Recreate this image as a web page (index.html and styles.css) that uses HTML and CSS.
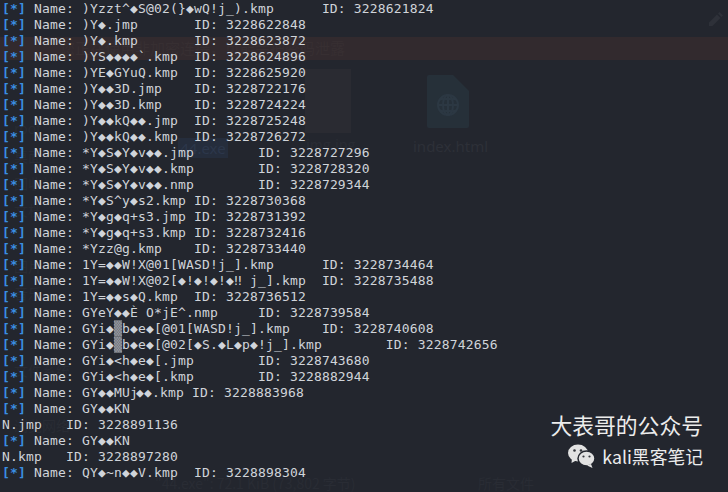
FILE: index.html
```html
<!DOCTYPE html>
<html lang="zh">
<head>
<meta charset="utf-8">
<title>Terminal</title>
<link rel="stylesheet" href="styles.css">
</head>
<body>
<div class="ghosts" aria-hidden="true">
  <div class="band"></div>
  <span class="gt g-warn">您正在使用非加密连接，可能会把密码泄露</span>
  <span class="gt g-root">root</span>
  <span class="gt g-a">桌面</span>
  <span class="gt g-b">回收站</span>
  <span class="gt g-c">文档</span>
  <span class="gt g-e">图片</span>
  <span class="gt g-f">音乐</span>
  <span class="gt g-h">文件系统</span>
  <span class="gt g-i">浏览网络</span>
  <div class="g-sel"><span>44.exe</span></div>
  <div class="g-photo"></div>
  <span class="gt g-img">img.jpg</span>
  <svg class="g-file" viewBox="0 0 42 53"><path class="g-fill" d="M2 0H26L42 16V51a2 2 0 0 1-2 2H2a2 2 0 0 1-2-2V2a2 2 0 0 1 2-2Z"/><circle class="g-line" cx="21" cy="30" r="10"/><path class="g-line" d="M11 30H31M21 20V40M13 24H29M13 36H29"/><ellipse class="g-line" cx="21" cy="30" rx="5" ry="10"/></svg>
  <span class="gt g-index">index.html</span>
  <svg class="g-pen" viewBox="0 0 14 14"><path d="M0 14V10.500L8 2.500 11.500 6 3.500 14ZM9 1.500 10.500 0 14 3.500 12.500 5Z"/></svg>
  <span class="gt g-size">"44.exe": 72.1 KiB (73,802 字节)</span>
  <span class="gt g-tail">所有文件</span>
</div>
<pre class="term"><span class="tag">[*]</span> Name: )Yzzt^◆S@02(}◆wQ!j_).kmp	ID: 3228621824
<span class="tag">[*]</span> Name: )Y◆.jmp	ID: 3228622848
<span class="tag">[*]</span> Name: )Y◆.kmp	ID: 3228623872
<span class="tag">[*]</span> Name: )YS◆◆◆◆`.kmp	ID: 3228624896
<span class="tag">[*]</span> Name: )YE◆GYuQ.kmp	ID: 3228625920
<span class="tag">[*]</span> Name: )Y◆◆3D.jmp	ID: 3228722176
<span class="tag">[*]</span> Name: )Y◆◆3D.kmp	ID: 3228724224
<span class="tag">[*]</span> Name: )Y◆◆kQ◆◆.jmp	ID: 3228725248
<span class="tag">[*]</span> Name: )Y◆◆kQ◆◆.kmp	ID: 3228726272
<span class="tag">[*]</span> Name: *Y◆S◆Y◆v◆◆.jmp	ID: 3228727296
<span class="tag">[*]</span> Name: *Y◆S◆Y◆v◆◆.kmp	ID: 3228728320
<span class="tag">[*]</span> Name: *Y◆S◆Y◆v◆◆.nmp	ID: 3228729344
<span class="tag">[*]</span> Name: *Y◆S^y◆s2.kmp ID: 3228730368
<span class="tag">[*]</span> Name: *Y◆g◆q+s3.jmp ID: 3228731392
<span class="tag">[*]</span> Name: *Y◆g◆q+s3.kmp ID: 3228732416
<span class="tag">[*]</span> Name: *Yzz@g.kmp	ID: 3228733440
<span class="tag">[*]</span> Name: 1Y=◆◆W!X@01[WASD!j_].kmp	ID: 3228734464
<span class="tag">[*]</span> Name: 1Y=◆◆W!X@02[◆!◆!◆!◆‼ j_].kmp	ID: 3228735488
<span class="tag">[*]</span> Name: 1Y=◆◆s◆Q.kmp	ID: 3228736512
<span class="tag">[*]</span> Name: GYeY◆◆È O*jE^.nmp	ID: 3228739584
<span class="tag">[*]</span> Name: GYi◆<span class="shade">▒</span>b◆e◆[@01[WASD!j_].kmp	ID: 3228740608
<span class="tag">[*]</span> Name: GYi◆<span class="shade">▒</span>b◆e◆[@02[◆S.◆L◆p◆!j_].kmp	ID: 3228742656
<span class="tag">[*]</span> Name: GYi◆&lt;h◆e◆[.jmp	ID: 3228743680
<span class="tag">[*]</span> Name: GYi◆&lt;h◆e◆[.kmp	ID: 3228882944
<span class="tag">[*]</span> Name: GY◆◆MU<span class="tight">j</span>◆◆.kmp ID: 3228883968
<span class="tag">[*]</span> Name: GY◆◆KN
N.jmp	ID: 3228891136
<span class="tag">[*]</span> Name: GY◆◆KN
N.kmp	ID: 3228897280
<span class="tag">[*]</span> Name: QY◆~n◆◆V.kmp	ID: 3228898304</pre>
<div class="mark">
  <div class="mark-title">大表哥的公众号</div>
  <div class="mark-sub">
    <svg class="wx" viewBox="0 0 27 24"><ellipse cx="10" cy="9" rx="10" ry="8.500"/><path d="M4 14 3.500 19 9 16Z"/><ellipse class="wx-edge" cx="18.500" cy="14.500" rx="8.500" ry="7.500"/><path d="M23 20 24.500 24 19 21.500Z"/><circle class="wx-eye" cx="6.500" cy="6.500" r="1.300"/><circle class="wx-eye" cx="13" cy="6.500" r="1.300"/><circle class="wx-eye" cx="15.500" cy="12.500" r="1.100"/><circle class="wx-eye" cx="21.500" cy="12.500" r="1.100"/></svg>
    <span>kali黑客笔记</span>
  </div>
</div>
</body>
</html>
```
FILE: styles.css
```css
html, body {
  margin: 0;
  height: 100%;
}
body {
  position: relative;
  width: 728px;
  height: 492px;
  overflow: hidden;
  background: #23262e;
}
.term {
  position: relative;
  margin: 0;
  padding: 1px 0 0 2px;
  font-family: "DejaVu Sans Mono", "Noto Sans CJK SC", monospace;
  font-size: 13px;
  letter-spacing: 0.17px;
  line-height: 16px;
  tab-size: 8;
  color: #d0d4da;
  white-space: pre;
}
.tag {
  color: #3a8ee2;
  font-weight: 700;
}
.shade {
  color: #9a9da3;
  background: #6c6f76;
  padding: 1px 0;
}
.tight {
  margin-right: -2px;
}
.ghosts {
  position: absolute;
  inset: 0;
}
.band {
  position: absolute;
  left: 0;
  right: 0;
  top: 37px;
  height: 23px;
  background: #322a2e;
}
.gt {
  position: absolute;
  font-family: "Noto Sans CJK SC", "Noto Sans", sans-serif;
  font-size: 14px;
  line-height: 16px;
  color: #292c34;
  white-space: nowrap;
}
.g-warn { left: 60px; top: 40px; color: #372f32; font-size: 15px; }
.g-root { left: 14px; top: 120px; }
.g-a { left: 14px; top: 148px; }
.g-b { left: 14px; top: 175px; }
.g-c { left: 14px; top: 202px; }
.g-e { left: 14px; top: 258px; }
.g-f { left: 14px; top: 285px; }
.g-h { left: 14px; top: 362px; }
.g-i { left: 14px; top: 417px; }
.g-sel {
  position: absolute;
  left: 178px;
  top: 138px;
  width: 50px;
  height: 20px;
  background: #252d3c;
  color: #2c374b;
  font-family: "Noto Sans", sans-serif;
  font-size: 15px;
  line-height: 20px;
  text-align: center;
}
.g-photo {
  position: absolute;
  left: 305px;
  top: 69px;
  width: 46px;
  height: 64px;
  background: #2a2b32;
}
.g-img { left: 306px; top: 136px; }
.g-file {
  position: absolute;
  left: 427px;
  top: 75px;
  width: 42px;
  height: 53px;
}
.g-fill { fill: #263039; }
.g-line { fill: none; stroke: #2c3843; stroke-width: 2; }
.g-index { left: 413px; top: 136px; font-size: 15px; line-height: 20px; color: #2d3038; font-family: "Noto Sans", sans-serif; }
.g-pen {
  position: absolute;
  left: 709px;
  top: 12px;
  width: 14px;
  height: 14px;
  fill: #2e3139;
}
.g-size { left: 155px; top: 475px; }
.g-tail { left: 478px; top: 475px; }
.mark {
  position: absolute;
  right: 25px;
  top: 410px;
  display: flex;
  flex-direction: column;
  align-items: flex-end;
  gap: 4px;
  color: #ececec;
  font-family: "Noto Sans CJK SC", sans-serif;
}
.mark-title {
  font-size: 21.800px;
  line-height: 30px;
}
.mark-sub {
  display: flex;
  align-items: center;
  gap: 7px;
  font-size: 17.800px;
  line-height: 24px;
}
.wx {
  width: 27px;
  height: 24px;
  fill: #e2e2e2;
}
.wx-edge {
  stroke: #23262e;
  stroke-width: 1.500;
}
.wx-eye {
  fill: #33363c;
}
```
